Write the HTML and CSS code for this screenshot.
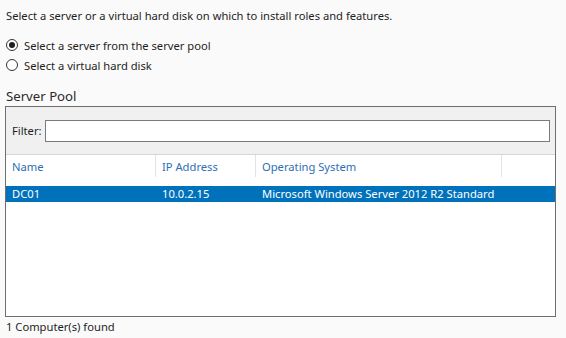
FILE: index.html
```html
<!DOCTYPE html>
<html lang="en">

<head>
  <meta charset="UTF-8">
  <title>Select destination server</title>
  <link rel="stylesheet" href="styles.css">
</head>

<body>
  <div class="page">
    <p class="intro">Select a server or a virtual hard disk on which to install roles and features.</p>

    <div class="choices">
      <label class="choice"><span class="radio checked"></span>Select a server from the server pool</label>
      <label class="choice"><span class="radio"></span>Select a virtual hard disk</label>
    </div>

    <div class="poolTitle">Server Pool</div>

    <div class="pool">
      <div class="filterBar">
        <span class="filterLabel">Filter:</span>
        <div class="filterInput"></div>
      </div>
      <div class="head">
        <div class="col colName">Name</div>
        <div class="col colIp">IP Address</div>
        <div class="col colOs">Operating System</div>
        <div class="col colRest"></div>
      </div>
      <div class="rows">
        <div class="row selected">
          <div class="cell colName">DC01</div>
          <div class="cell colIp">10.0.2.15</div>
          <div class="cell colOs">Microsoft Windows Server 2012 R2 Standard</div>
        </div>
      </div>
    </div>

    <div class="found">1 Computer(s) found</div>
  </div>
</body>

</html>
```

FILE: styles.css
```css
body {
  margin: 0;
  background-color: #fafafa;
  font-family: "Noto Sans", "Open Sans", sans-serif;
  font-size: 11.2px;
  color: #1e1e1e;
}

.page {
  padding: 8px 0 0 5px;
  width: 551px;
}

.intro {
  margin: 0 0 0 1px;
  line-height: 16px;
}

.choices {
  margin-top: 11px;
  display: flex;
  flex-direction: column;
}

.choice {
  display: flex;
  align-items: center;
  height: 20px;
  padding-left: 1px;
}

.radio {
  width: 10px;
  height: 10px;
  border: 1px solid #333;
  border-radius: 50%;
  background-color: #fff;
  margin-right: 6px;
  display: flex;
  align-items: center;
  justify-content: center;
}

.radio.checked::after {
  content: "";
  width: 6px;
  height: 6px;
  border-radius: 50%;
  background-color: #1e1e1e;
}

.poolTitle {
  margin-top: 12px;
  font-size: 13.2px;
  line-height: 18px;
  padding-left: 1px;
  color: #2b2b2b;
}

.pool {
  margin-top: 1px;
  height: 209px;
  border: 1px solid #6e6e6e;
  background-color: #fff;
  display: flex;
  flex-direction: column;
}

.filterBar {
  height: 48px;
  background-color: #f0f0f0;
  border-bottom: 1px solid #d5d5d5;
  display: flex;
  align-items: center;
  padding: 0 5px 0 6px;
  box-sizing: border-box;
}

.filterLabel {
  width: 33px;
  flex: none;
}

.filterInput {
  flex: 1;
  height: 20px;
  border: 1px solid #7a7a7a;
  background-color: #fff;
}

.head {
  height: 31px;
  display: flex;
}

.col {
  height: 22px;
  line-height: 24px;
  padding-left: 6px;
  color: #2e6fb5;
  border-right: 1px solid #e4e4e4;
  box-sizing: border-box;
  flex: none;
}

.colName {
  width: 150px;
}

.colIp {
  width: 100px;
}

.colOs {
  width: 246px;
}

.colRest {
  flex: 1;
  border-right: none;
}

.rows {
  flex: 1;
}

.row {
  display: flex;
  height: 16px;
  line-height: 16px;
}

.row.selected {
  background-color: #0072bc;
  color: #fff;
}

.cell {
  padding-left: 6px;
  box-sizing: border-box;
  white-space: nowrap;
  flex: none;
}

.found {
  margin-top: 2px;
  line-height: 16px;
  padding-left: 1px;
}
```
